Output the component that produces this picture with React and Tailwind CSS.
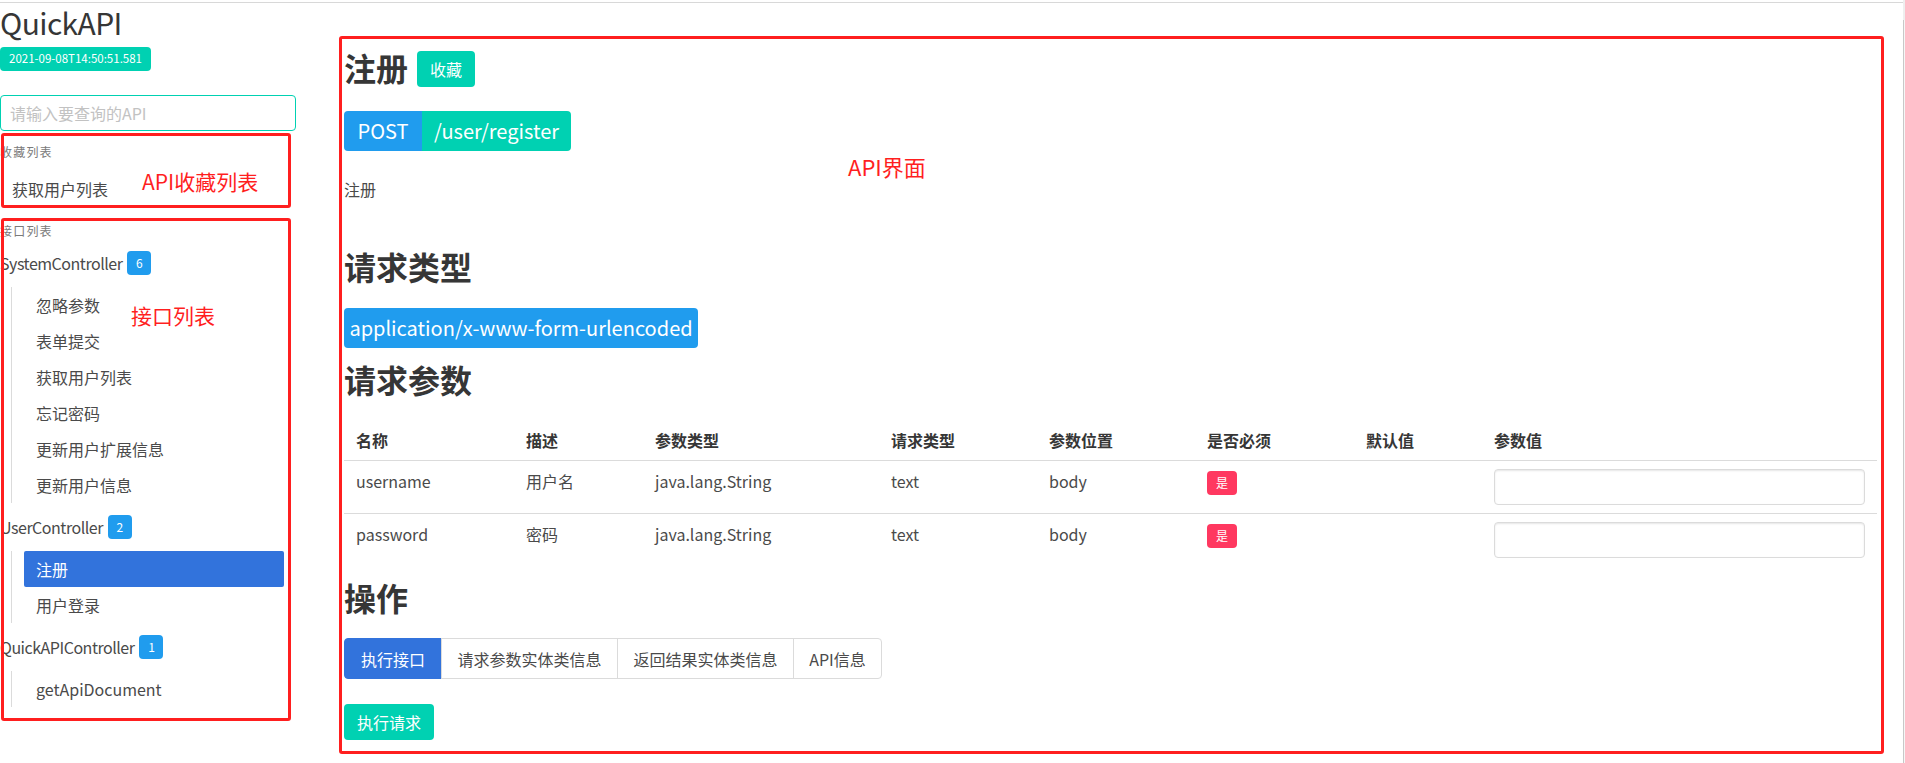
import React from "react";

const groups = [
    {
        name: "SystemController",
        count: 6,
        items: ["忽略参数", "表单提交", "获取用户列表", "忘记密码", "更新用户扩展信息", "更新用户信息"],
    },
    { name: "UserController", count: 2, items: ["注册", "用户登录"], active: "注册" },
    { name: "QuickAPIController", count: 1, items: ["getApiDocument"] },
];

const columns = [
    { label: "名称", w: "w-[170px]" },
    { label: "描述", w: "w-[129px]" },
    { label: "参数类型", w: "w-[236px]" },
    { label: "请求类型", w: "w-[158px]" },
    { label: "参数位置", w: "w-[158px]" },
    { label: "是否必须", w: "w-[159px]" },
    { label: "默认值", w: "w-[128px]" },
    { label: "参数值", w: "w-[395px]" },
];

const params = [
    { name: "username", desc: "用户名", type: "java.lang.String", req: "text", pos: "body" },
    { name: "password", desc: "密码", type: "java.lang.String", req: "text", pos: "body" },
];

const tabs = [
    { label: "执行接口", w: "w-[98px]" },
    { label: "请求参数实体类信息", w: "w-[177px]" },
    { label: "返回结果实体类信息", w: "w-[177px]" },
    { label: "API信息", w: "w-[89px]" },
];

function MenuGroup({ name, count, items, active, first }) {
    return (
        <div className={first ? "mt-[11px]" : "mt-3"}>
            <div className="flex h-6 items-center leading-6 text-[#4a4a4a]">
                <span className="tracking-[-0.03em]">{name}</span>
                <span className="ml-[5px] inline-flex h-6 w-6 items-center justify-center rounded-[4px] bg-[#209cee] text-xs text-white">
                    {count}
                </span>
            </div>
            <ul className="mt-3 ml-[11px] mr-3 border-l border-[#dbdbdb] pl-3">
                {items.map((item) => (
                    <li
                        key={item}
                        className={
                            item === active
                                ? "flex h-9 items-center rounded-[2px] bg-[#3273dc] px-3 text-white"
                                : "flex h-9 items-center rounded-[2px] px-3 text-[#4a4a4a]"
                        }
                    >
                        {item}
                    </li>
                ))}
            </ul>
        </div>
    );
}

function Sidebar() {
    return (
        <div className="w-[296px] shrink-0">
            <h1 className="pt-px text-[30px] leading-[36px] tracking-[-0.02em] text-[#363636]">QuickAPI</h1>
            <span className="mt-[7px] inline-flex h-6 w-[151px] items-center justify-center rounded-[4px] bg-[#00d1b2] text-[11.5px] text-white">
                2021-09-08T14:50:51.581
            </span>
            <div className="mt-6 flex h-9 items-center rounded-[4px] border border-[#00d1b2] pl-[9px] text-[#c2c2c2]">
                请输入要查询的API
            </div>

            {/* Favourites */}
            <div className="relative mt-[2px] h-[75px] pt-[10px]">
                <p className="text-xs leading-[18px] tracking-[0.1em] text-[#7a7a7a]">收藏列表</p>
                <div className="mt-[10px] flex h-9 items-center px-3 text-[#4a4a4a]">获取用户列表</div>
                <div className="pointer-events-none absolute top-0 left-[1px] h-[75px] w-[290px] rounded-[3px] border-[3px] border-[#ff1f1f]" />
                <span className="absolute top-[36px] left-[142px] text-[21px] leading-[24px] text-[#ff1f1f]">API收藏列表</span>
            </div>

            {/* Interfaces */}
            <div className="relative mt-[10px] pt-1 pb-[14px]">
                <p className="text-xs leading-[18px] tracking-[0.1em] text-[#7a7a7a]">接口列表</p>
                {groups.map((g, i) => (
                    <MenuGroup key={g.name} {...g} first={i === 0} />
                ))}
                <div className="pointer-events-none absolute inset-y-0 left-[1px] w-[290px] rounded-[3px] border-[3px] border-[#ff1f1f]" />
                <span className="absolute top-[85px] left-[131px] text-[21px] leading-[24px] text-[#ff1f1f]">接口列表</span>
            </div>
        </div>
    );
}

function Heading({ children, className = "" }) {
    return <h2 className={`text-[32px] leading-[40px] font-bold text-[#363636] ${className}`}>{children}</h2>;
}

function ApiPanel() {
    return (
        <div className="relative mt-[33px] ml-[43px] h-[718px] w-[1545px] shrink-0 rounded-[3px] border-[3px] border-[#ff1f1f] pr-1 pl-[2px]">
            <span className="absolute top-[114px] left-[506px] text-[22px] leading-[26px] text-[#ff1f1f]">API界面</span>

            <div className="flex items-start pt-3">
                <h2 className="text-[32px] leading-[32px] font-bold text-[#363636]">注册</h2>
                <button className="ml-[9px] flex h-9 w-[58px] items-center justify-center rounded-[4px] bg-[#00d1b2] text-white">
                    收藏
                </button>
            </div>

            <div className="mt-6 flex h-10 text-xl text-white">
                <span className="flex w-[78px] items-center justify-center rounded-l-[4px] bg-[#209cee]">POST</span>
                <span className="flex w-[149px] items-center justify-center rounded-r-[4px] bg-[#00d1b2]">/user/register</span>
            </div>

            <p className="mt-[26px] leading-6 text-[#4a4a4a]">注册</p>

            <Heading className="mt-[45px]">请求类型</Heading>
            <div className="mt-[22px] flex h-10 w-[354px] items-center justify-center rounded-[4px] bg-[#209cee] text-xl text-white">
                application/x-www-form-urlencoded
            </div>

            <Heading className="mt-[11px]">请求参数</Heading>
            <table className="mt-[21px] w-[1533px] table-fixed border-collapse text-left">
                <colgroup>
                    {columns.map((c) => (
                        <col key={c.label} className={c.w} />
                    ))}
                </colgroup>
                <thead>
                    <tr className="border-b border-[#dbdbdb]">
                        {columns.map((c) => (
                            <th key={c.label} className="px-3 py-2 leading-6 font-bold text-[#363636]">
                                {c.label}
                            </th>
                        ))}
                    </tr>
                </thead>
                <tbody className="text-[#4a4a4a]">
                    {params.map((p, i) => (
                        <tr key={p.name} className={i === 0 ? "border-b border-[#dbdbdb]" : ""}>
                            <td className="px-3 py-2 align-top leading-6">{p.name}</td>
                            <td className="px-3 py-2 align-top leading-6">{p.desc}</td>
                            <td className="px-3 py-2 align-top leading-6">{p.type}</td>
                            <td className="px-3 py-2 align-top leading-6">{p.req}</td>
                            <td className="px-3 py-2 align-top leading-6">{p.pos}</td>
                            <td className="px-3 py-2 align-top leading-6">
                                <span className="inline-flex h-6 items-center rounded-[4px] bg-[#ff3860] px-[9px] text-xs text-white">是</span>
                            </td>
                            <td className="px-3 py-2 align-top leading-6" />
                            <td className="px-3 py-2 align-top leading-6">
                                <div className="h-9 w-full rounded-[4px] border border-[#dbdbdb] shadow-[inset_0_1px_2px_rgba(10,10,10,0.1)]" />
                            </td>
                        </tr>
                    ))}
                </tbody>
            </table>

            <Heading className="mt-[11px]">操作</Heading>
            <div className="mt-[21px] flex h-[41px]">
                {tabs.map((t, i) => (
                    <div
                        key={t.label}
                        className={
                            i === 0
                                ? `${t.w} flex items-center justify-center rounded-l-[4px] border border-[#3273dc] bg-[#3273dc] text-white`
                                : `${t.w} -ml-px flex items-center justify-center border border-[#dbdbdb] text-[#4a4a4a] ${i === tabs.length - 1 ? "rounded-r-[4px]" : ""}`
                        }
                    >
                        {t.label}
                    </div>
                ))}
            </div>

            <button className="mt-[25px] flex h-9 w-[90px] items-center justify-center rounded-[4px] bg-[#00d1b2] text-white">
                执行请求
            </button>
        </div>
    );
}

export default function App() {
    return (
        <div className="flex h-[763px] w-[1905px] overflow-hidden bg-white font-['Noto_Sans_CJK_SC',sans-serif] text-base">
            <div className="flex-1 pt-[2px]">
                <div className="flex h-full border-t border-[#d8d8d8]">
                    <Sidebar />
                    <ApiPanel />
                </div>
            </div>
            <div className="flex w-[2px] flex-col">
                <div className="h-5 bg-[#efefef]" />
                <div className="flex-1 border-l border-[#c8c8c8] bg-[#f6f6f6]" />
            </div>
        </div>
    );
}
